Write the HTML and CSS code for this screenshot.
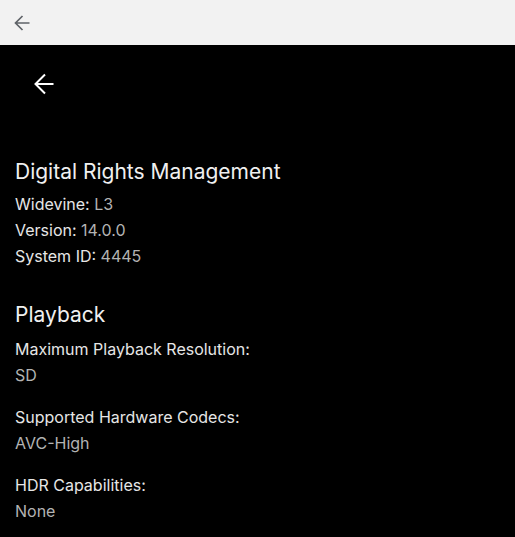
FILE: index.html
```html
<!DOCTYPE html>
<html>
<head>
<meta charset="utf-8">
<link rel="stylesheet" href="styles.css">
</head>
<body>
<div class="topbar">
  <svg class="top-back" width="16" height="16" viewBox="0 0 16 16"><path d="M15.5 8H1.5M8.5 1L1.5 8l7 7" fill="none" stroke="#5f6368" stroke-width="1.7"/></svg>
</div>
<main class="page">
  <div class="nav">
    <svg class="back" width="20" height="22" viewBox="0 0 20 22"><path d="M19.5 11H2M11 1.5L1.5 11l9.5 9.5" fill="none" stroke="#fff" stroke-width="2"/></svg>
  </div>
  <section class="section drm">
    <h2 class="title">Digital Rights Management</h2>
    <p class="line">Widevine: <span class="val">L3</span></p>
    <p class="line">Version: <span class="val">14.0.0</span></p>
    <p class="line">System ID: <span class="val">4445</span></p>
  </section>
  <section class="section playback">
    <h2 class="title">Playback</h2>
    <div class="item">
      <p class="line">Maximum Playback Resolution:</p>
      <p class="line val">SD</p>
    </div>
    <div class="item">
      <p class="line">Supported Hardware Codecs:</p>
      <p class="line val">AVC-High</p>
    </div>
    <div class="item">
      <p class="line">HDR Capabilities:</p>
      <p class="line val">None</p>
    </div>
  </section>
</main>
</body>
</html>
```
FILE: styles.css
```css
html, body {
  margin: 0;
  padding: 0;
  background: #000;
  font-family: Inter, Roboto, sans-serif;
}
.topbar {
  height: 45px;
  background: #f2f2f2;
  display: flex;
  align-items: center;
  padding-left: 14px;
}
.top-back { display: block; }
.page {
  background: #000;
  color: #e6e6e6;
  padding: 0 15px;
}
.nav {
  height: 78px;
  display: flex;
  align-items: center;
  padding-left: 19px;
}
.back { display: block; }
.drm { margin-top: 36px; }
.playback { margin-top: 33px; }
.title {
  margin: 0 0 6px;
  font-weight: 400;
  font-size: 21px;
  line-height: 26px;
  color: #f0f0f0;
}
.playback .title { margin-bottom: 8px; }
.line {
  margin: 0;
  font-size: 16px;
  line-height: 26px;
  color: #e6e6e6;
}
.val { color: #b3b3b3; }
.item { margin-bottom: 16px; }
```
